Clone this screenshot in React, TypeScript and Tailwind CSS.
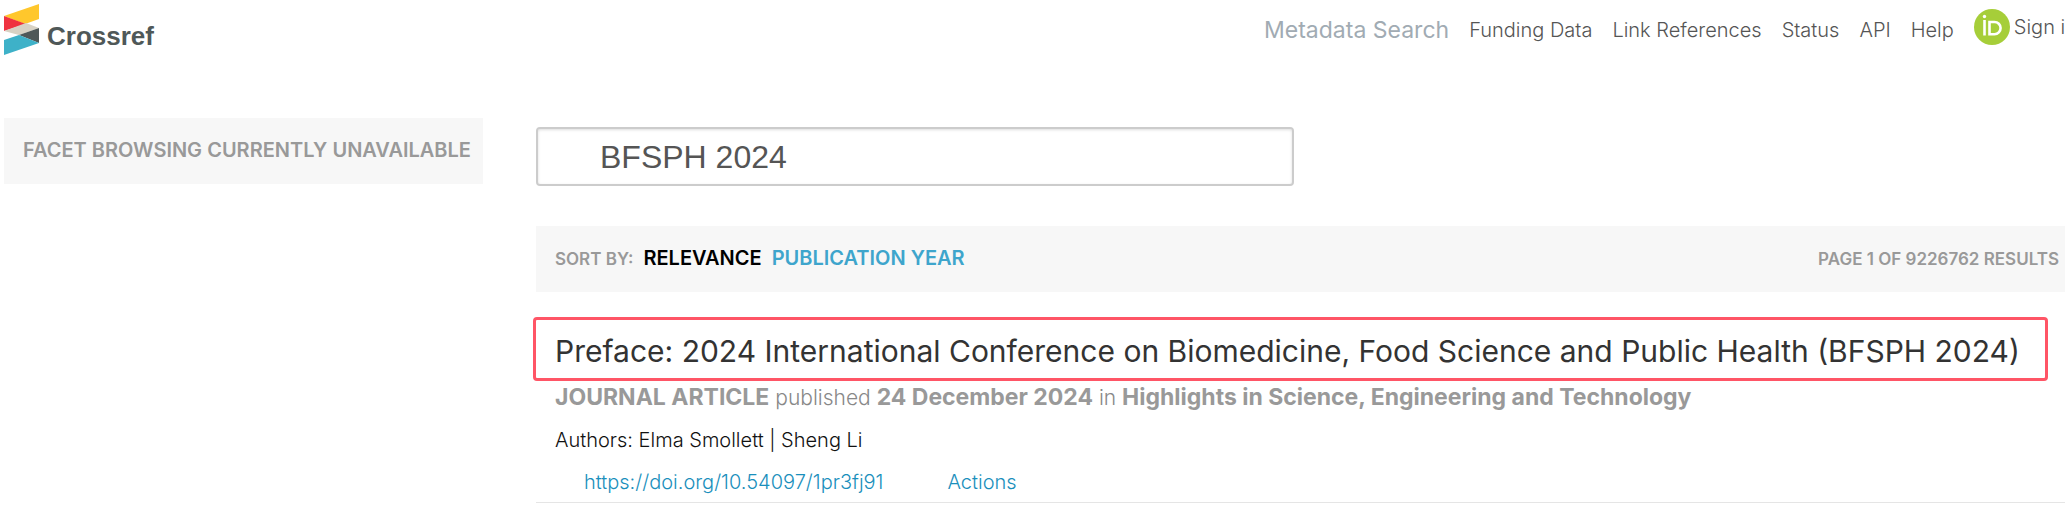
import type { ReactNode } from 'react';

const navLinks = ['Funding Data', 'Link References', 'Status', 'API', 'Help'];

function CrossrefLogo() {
  return (
    <a href="#" aria-label="Crossref" className="flex items-start pt-1 pl-1">
      <svg width="35" height="51" viewBox="0 0 35 51" aria-hidden="true">
        <path d="M0 12 35 0v15L21 20z" fill="#ffc72c" />
        <path d="M0 12 22 20 0 27z" fill="#ef3340" />
        <path d="M22 19 35 24 15 31 0 27z" fill="#d8d2c4" />
        <path d="M35 24v15L15 31z" fill="#4f5858" />
        <path d="M0 36 15 31 35 39 0 51z" fill="#3eb1c8" />
      </svg>
      <span className="pt-3 pl-2 font-['Liberation_Sans',sans-serif] text-[26px] leading-10 font-bold text-[#4f5858]">
        Crossref
      </span>
    </a>
  );
}

function OrcidIcon() {
  return (
    <svg width="36" height="36" viewBox="0 0 36 36" aria-hidden="true">
      <circle cx="18" cy="18" r="18" fill="#a6ce39" />
      <g fill="none" stroke="#fff" strokeWidth="2.600">
        <path d="M10.500 11v15.500" />
        <path d="M15.500 13h5a6 6 0 0 1 0 12.200h-5z" />
      </g>
      <circle cx="10.500" cy="7.500" r="1.700" fill="#fff" />
    </svg>
  );
}

function Header() {
  return (
    <header className="flex h-[118px] items-start justify-between">
      <CrossrefLogo />
      {/* the sign in link runs past the right edge of the window */}
      <nav className="-mr-3 flex shrink-0 items-start gap-5 pt-[9px] text-[20px] leading-[42px] font-light text-[#555]">
        <a href="#" className="text-[23px] font-normal text-[#a1abb3]">
          Metadata Search
        </a>
        {navLinks.map((link) => (
          <a key={link} href="#">
            {link}
          </a>
        ))}
        <a href="#" className="flex h-9 items-center gap-1 whitespace-nowrap">
          <OrcidIcon />
          Sign in
        </a>
      </nav>
    </header>
  );
}

function Bar({ children }: { children: ReactNode }) {
  return (
    <div className="flex h-[66px] items-center justify-between bg-[#f7f7f7] pr-1.5 pb-0.5 pl-[19px] font-semibold text-[#999]">
      {children}
    </div>
  );
}

function Result() {
  return (
    <article className="mt-[25px] border-b border-[#e5e5e5]">
      <div className="mr-[17px] -ml-[3px] rounded border-3 border-[#ff5566] pt-1.5 pb-0.5 pl-[19px]">
        <h2 className="text-[30px] leading-[50px] whitespace-nowrap text-[#333]">
          Preface: 2024 International Conference on Biomedicine, Food Science and Public Health (BFSPH 2024)
        </h2>
      </div>
      <div className="pl-[19px]">
        <p className="text-[21px] leading-8 font-light text-[#888]">
          <strong className="text-[23px] font-bold text-[#999]">JOURNAL ARTICLE</strong> published{' '}
          <strong className="text-[23px] font-bold text-[#999]">24 December 2024</strong> in{' '}
          <strong className="text-[23px] font-bold text-[#999]">
            Highlights in Science, Engineering and Technology
          </strong>
        </p>
        <p className="mt-1.5 text-[20px] leading-10 font-light text-[#111]">Authors: Elma Smollett | Sheng Li</p>
        <div className="mt-0.5 flex gap-16 pl-[29px] text-[20px] leading-10 font-light text-[#1a8fbc]">
          <a href="#">https://doi.org/10.54097/1pr3fj91</a>
          <button type="button">Actions</button>
        </div>
      </div>
    </article>
  );
}

export default function App() {
  return (
    <div className="overflow-hidden bg-white font-['Inter',sans-serif]">
      <Header />
      <div className="flex items-start pl-1">
        <aside className="w-[479px] shrink-0 text-[20px] whitespace-nowrap">
          <Bar>FACET BROWSING CURRENTLY UNAVAILABLE</Bar>
        </aside>
        <main className="ml-[53px] min-w-0 flex-1 pt-[9px]">
          <input
            type="text"
            aria-label="Search"
            defaultValue="BFSPH 2024"
            className="block h-[59px] w-1/2 max-w-[758px] rounded border-2 border-[#ccc] pt-0.5 pl-[62px] font-['Liberation_Sans',sans-serif] text-[32px] text-[#555] shadow-[inset_0_1px_3px_#0002] outline-none"
          />
          <div className="mt-10">
            <Bar>
              <div className="flex items-baseline gap-2.5 text-[20px]">
                <span className="text-[17px]">SORT BY:</span>
                <button type="button" className="text-black">
                  RELEVANCE
                </button>
                <button type="button" className="text-[#3ea5cc]">
                  PUBLICATION YEAR
                </button>
              </div>
              <span className="pt-1 text-[17px]">PAGE 1 OF 9226762 RESULTS</span>
            </Bar>
          </div>
          <Result />
        </main>
      </div>
    </div>
  );
}
